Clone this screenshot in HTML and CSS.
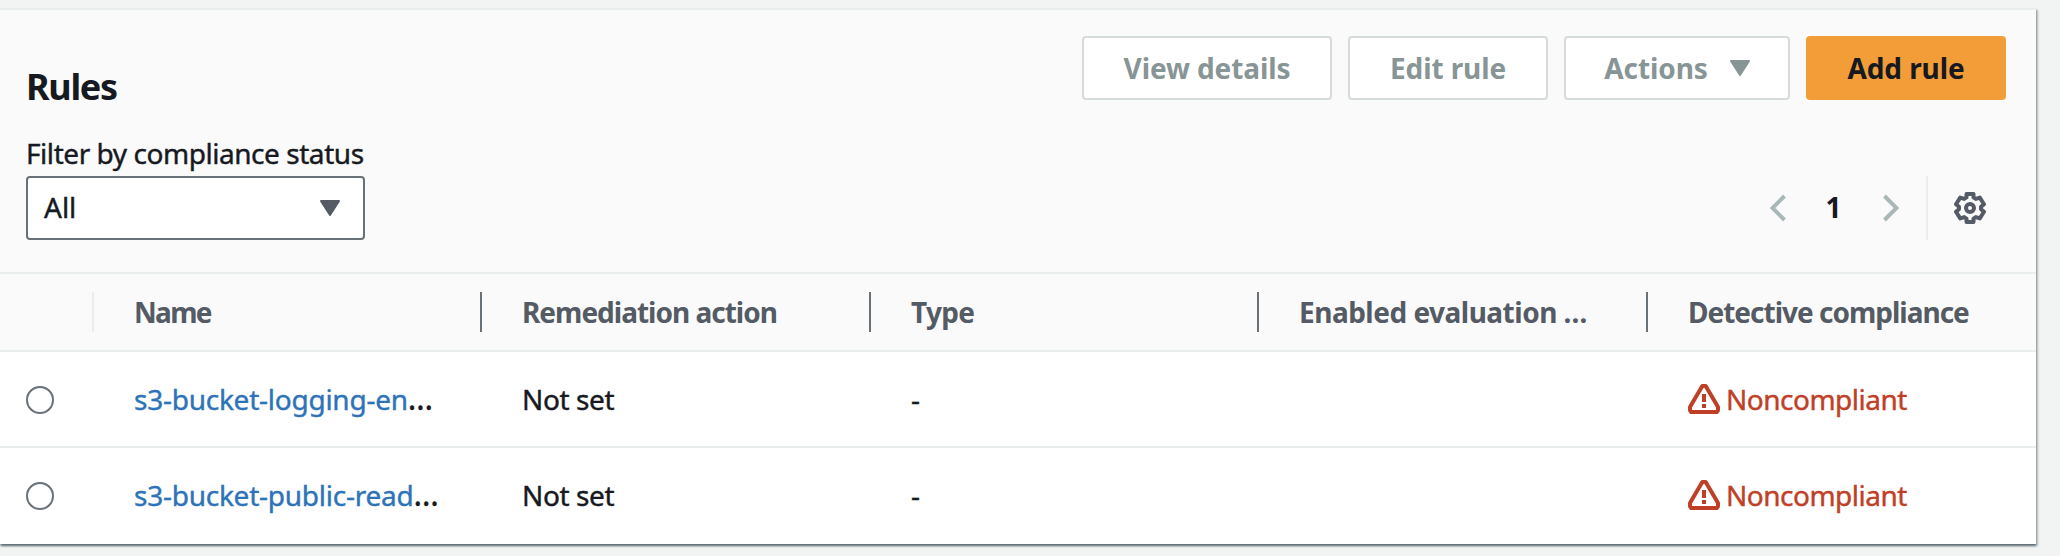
FILE: index.html
```
<!DOCTYPE html>
<html lang="en">
<head>
<meta charset="utf-8">
<title>Rules</title>
<link rel="stylesheet" href="styles.css">
</head>
<body>
<main class="panel">
  <header class="panel-header">
    <div class="title-row">
      <h2 class="title">Rules</h2>
      <div class="actions">
        <button class="btn btn-view" disabled>View details</button>
        <button class="btn btn-edit" disabled>Edit rule</button>
        <button class="btn btn-menu" disabled>Actions
          <svg class="caret" viewBox="0 0 20 16"><path d="M1 1h18l-9 14z"/></svg>
        </button>
        <button class="btn btn-primary">Add rule</button>
      </div>
    </div>
    <div class="filter-row">
      <div class="filter">
        <div class="filter-label">Filter by compliance status</div>
        <div class="select"><span>All</span>
          <svg class="caret" viewBox="0 0 20 16"><path d="M1 1h18l-9 14z"/></svg>
        </div>
      </div>
      <div class="tools">
        <svg class="chevron" viewBox="0 0 16 28"><path d="M14.500 2L2.500 14l12 12"/></svg>
        <span class="page">1</span>
        <svg class="chevron" viewBox="0 0 16 28"><path d="M1.500 2l12 12-12 12"/></svg>
        <div class="settings">
          <svg class="gear" viewBox="0 0 32 32"><path d="M12.500 2h7v3.400l2.300 1.500 4-1.300L30 12.200l-3 2.600v2.400l3 2.600-4.200 6.600-4-1.300-2.300 1.500V30h-7v-3.400l-2.300-1.500-4 1.300L2 19.800l3-2.600v-2.400l-3-2.600 4.200-6.600 4 1.300 2.300-1.500z"/><circle cx="16" cy="16" r="4"/></svg>
        </div>
      </div>
    </div>
  </header>
  <section class="table">
    <div class="row head">
      <div class="cell pick"></div>
      <div class="cell name-head">Name</div>
      <div class="cell tight">Remediation action</div>
      <div class="cell type">Type</div>
      <div class="cell evaluation">Enabled evaluation …</div>
      <div class="cell tight">Detective compliance</div>
    </div>
    <div class="row">
      <div class="cell pick"><span class="radio"></span></div>
      <div class="cell name"><a class="link">s3-bucket-logging-en</a><span class="more">…</span></div>
      <div class="cell plain">Not set</div>
      <div class="cell">-</div>
      <div class="cell"></div>
      <div class="cell status">
        <svg class="warning" viewBox="0 0 32 32"><path d="M14.300 3h3.400L30 24v3.300L28.800 29H3.200L2 27.300V24z"/><path class="mark" d="M16 11V19M16 21V25"/></svg>Noncompliant</div>
    </div>
    <div class="row">
      <div class="cell pick"><span class="radio"></span></div>
      <div class="cell name"><a class="link">s3-bucket-public-read</a><span class="more">…</span></div>
      <div class="cell plain">Not set</div>
      <div class="cell">-</div>
      <div class="cell"></div>
      <div class="cell status">
        <svg class="warning" viewBox="0 0 32 32"><path d="M14.300 3h3.400L30 24v3.300L28.800 29H3.200L2 27.300V24z"/><path class="mark" d="M16 11V19M16 21V25"/></svg>Noncompliant</div>
    </div>
  </section>
</main>
</body>
</html>
```
FILE: styles.css
```
* { box-sizing: border-box; }

body {
  margin: 0;
  height: 556px;
  padding: 8px 24px 0 0;
  overflow: hidden;
  background: #f2f3f3;
  color: #16191f;
  font: 28px/44px "Noto Sans", "Open Sans", sans-serif;
}

svg { display: block; flex: none; }

.panel {
  height: 536px;
  border-top: 2px solid #eaeded;
  background: #fff;
  box-shadow: 0 2px 2px 0 rgba(0, 28, 36, .5), 2px 2px 2px 0 rgba(0, 28, 36, .24);
}

.panel-header {
  height: 264px;
  padding: 26px 30px 0 26px;
  background: #fafafa;
  border-bottom: 2px solid #eaeded;
}

.title-row, .filter-row { display: flex; justify-content: space-between; }
.title-row { height: 95px; }

.title {
  margin: 0;
  padding-top: 29px;
  font-size: 36px;
  font-weight: 700;
  letter-spacing: -1.3px;
}

.actions { display: flex; gap: 16px; }

.btn {
  display: flex;
  align-items: center;
  justify-content: center;
  width: 200px;
  height: 64px;
  padding: 0 0 1px;
  border: 2px solid #d5dbdb;
  border-radius: 4px;
  background: #fff;
  color: #879596;
  font: 700 28px/44px "Noto Sans", "Open Sans", sans-serif;
  letter-spacing: -.1px;
}
.btn-view { width: 250px; }
.btn-menu { width: 226px; gap: 22px; }
.btn-primary { border-color: #f29d38; background: #f29d38; color: #16191f; }

.caret {
  width: 20px;
  height: 16px;
  fill: currentColor;
  stroke: currentColor;
  stroke-width: 2;
  stroke-linejoin: round;
}

.filter-label {
  letter-spacing: -.45px;
  white-space: nowrap;
  -webkit-text-stroke: .4px currentColor;
}

.select {
  display: flex;
  align-items: center;
  justify-content: space-between;
  width: 339px;
  height: 64px;
  margin-top: 1px;
  padding: 0 23px 0 16px;
  border: 2px solid #687078;
  border-radius: 4px;
  background: #fff;
}
.select span { padding-bottom: 2px; -webkit-text-stroke: .4px currentColor; }
.select .caret { color: #545b64; }

.tools { display: flex; align-items: center; height: 64px; margin-top: 45px; }

.chevron {
  width: 16px;
  height: 28px;
  fill: none;
  stroke: #aab7b8;
  stroke-width: 4;
}

.page { width: 97px; padding: 0 2px 2px 0; text-align: center; font-weight: 700; }

.settings {
  display: flex;
  align-items: center;
  height: 64px;
  margin-left: 27px;
  padding: 0 20px 0 26px;
  border-left: 2px solid #eaeded;
}

.gear {
  width: 32px;
  height: 32px;
  fill: none;
  stroke: #545b64;
  stroke-width: 4;
  stroke-linejoin: round;
}

.row {
  display: grid;
  grid-template-columns: 94px 388px 389px 388px 389px 1fr;
  align-items: center;
  height: 96px;
  border-bottom: 2px solid #eaeded;
}
.row:last-child { border-bottom-color: transparent; }

.head {
  height: 78px;
  background: #fafafa;
  color: #545b64;
  font-weight: 700;
}

.cell { padding-left: 40px; white-space: nowrap; }
.cell.pick { padding-left: 26px; }

.row:not(.head) .cell { -webkit-text-stroke: .4px currentColor; }

.head .cell { height: 40px; line-height: 40px; border-right: 2px solid #687078; }
.head .pick { border-right-color: #eaeded; }
.head .cell:last-child { border-right: 0; }
.head .name-head { letter-spacing: -1.7px; }
.head .tight { letter-spacing: -1px; }
.head .type { letter-spacing: -.7px; }
.head .evaluation { letter-spacing: -.5px; }

.radio {
  display: block;
  width: 28px;
  height: 28px;
  margin-top: 2px;
  border: 2px solid #687078;
  border-radius: 50%;
}

.name { letter-spacing: -.25px; }
.link { color: #2e73b8; }
.more { font-size: 32px; line-height: 40px; }

.plain { letter-spacing: -.4px; }

.status { display: flex; align-items: center; gap: 6px; color: #bf4026; letter-spacing: -.5px; }

.warning {
  width: 32px;
  height: 32px;
  fill: none;
  stroke: currentColor;
  stroke-width: 4;
  stroke-linejoin: round;
}
```
